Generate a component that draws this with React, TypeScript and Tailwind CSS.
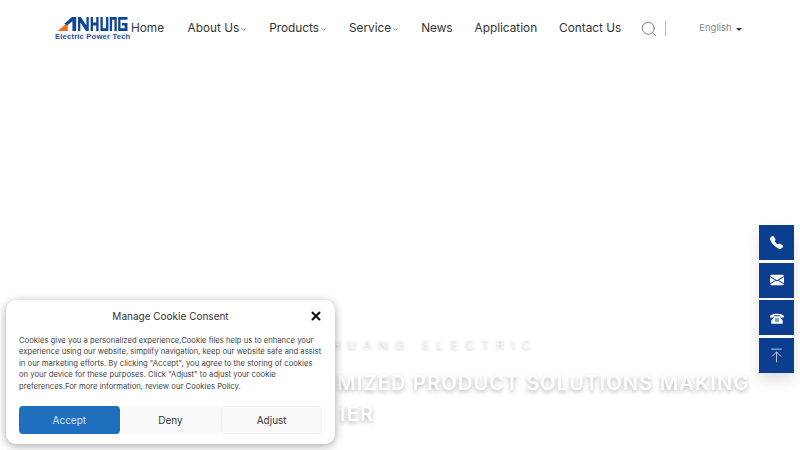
import { ChevronDown, Search, ArrowUpToLine, X } from 'lucide-react';
import { BsTelephoneFill, BsEnvelopeFill } from 'react-icons/bs';

const font = "font-['Inter','Noto_Sans',sans-serif]";

const navItems = [
  { label: 'Home', caret: false },
  { label: 'About Us', caret: true },
  { label: 'Products', caret: true },
  { label: 'Service', caret: true },
  { label: 'News', caret: false },
  { label: 'Application', caret: false },
  { label: 'Contact Us', caret: false },
];

function Logo() {
  return (
    <div className="w-[75px] h-[24px] flex flex-col shrink-0">
      <svg viewBox="0 0 75 15" className="w-[75px] h-[15px]">
        <path d="M0 15 L11 6 V15 Z" fill="#e8701c" />
        <path d="M7 7.5 L15.5 0 H20 V15 H16 V4.5 L11 8.5 Z" fill="#0f4596" />
        <path d="M22 15V0h3l6 9V0h2.5v15h-3l-6-9v9z" fill="#0f4596" />
        <path d="M35.5 0H38v6h3.5V0H44v15h-2.5V9H38v6h-2.5z" fill="#0f4596" />
        <path d="M46 0h2.5v12h3.5V0h2.5v15H46z" fill="#0f4596" />
        <path d="M56 15V0h7.5v15H61V3h-2.5v12z" fill="#0f4596" />
        <path d="M65 0h10v3h-7.5v9H72V9h-3V6.5h6V15H65z" fill="#0f4596" />
      </svg>
      <span className="font-['Liberation_Sans',sans-serif] font-bold text-[7.6px] leading-[9px] tracking-[0.2px] text-[#1b4ea0] whitespace-nowrap mt-[1px]">
        Electric Power Tech
      </span>
    </div>
  );
}

function Header() {
  return (
    <header className="flex items-center h-[57px] pl-[55px]">
      <Logo />
      <nav className="flex items-center ml-[1px] gap-[22px]">
        {navItems.map((item) => (
          <a key={item.label} className="flex items-center text-[11.8px] text-[#333] whitespace-nowrap first:mr-[1.5px]">
            {item.label}
            {item.caret && <ChevronDown className="w-[7px] h-[7px] ml-[1px] mt-[2px] text-[#555]" strokeWidth={2.5} />}
          </a>
        ))}
      </nav>
      <Search className="w-[18px] h-[18px] ml-[19px] text-[#777]" strokeWidth={1.25} />
      <div className="w-px h-[15px] bg-[#bbb] ml-[7px]" />
      <div className="flex items-center ml-[33px] text-[9.5px] text-[#888]">
        English
        <span className="ml-[4px] mt-[1px] border-x-[3px] border-t-[3px] border-x-transparent border-t-[#333]" />
      </div>
    </header>
  );
}

function Hero() {
  return (
    <div className="absolute left-[337px] top-[337px] w-[450px] text-white">
      <div className="-ml-[6px] text-[12px] leading-[16px] tracking-[7.3px] text-white/70 [text-shadow:0_1px_3px_rgba(0,0,0,0.25)] whitespace-nowrap">
        HUANG ELECTRIC
      </div>
      <div className="text-[20px] leading-[31px] font-semibold tracking-[1.2px] mt-[15px] [text-shadow:0_2px_4px_rgba(0,0,0,0.3)] whitespace-nowrap">
        MIZED PRODUCT SOLUTIONS MAKING
        <br />
        <span className="pl-[3px]">IER</span>
      </div>
    </div>
  );
}

function DeskPhone() {
  return (
    <svg viewBox="0 0 16 13" className="w-[14px] h-[12px]" fill="currentColor">
      <path d="M0 4.5C1 .5 15 .5 16 4.5V6h-4.3V3.8C10 3.2 6 3.2 4.3 3.8V6H0z" />
      <path d="M4.5 4.5h7V6l3 3v4h-13V9l3-3z" />
      <rect x="5.5" y="6.5" width="5" height="4.5" fill="#8aa3c9" />
    </svg>
  );
}

function SideBar() {
  const box = 'w-[35px] h-[35px] bg-[#0b3e8f] flex items-center justify-center text-white';
  return (
    <div className="absolute left-[759px] top-[225px] flex flex-col gap-[2.5px] shadow-[0_8px_14px_rgba(0,0,0,0.12)]">
      <div className={box}><BsTelephoneFill className="w-[13px] h-[13px]" /></div>
      <div className={box}><BsEnvelopeFill className="w-[14px] h-[14px]" /></div>
      <div className={box}><DeskPhone /></div>
      <div className={box}><ArrowUpToLine className="w-[17px] h-[17px]" strokeWidth={1} /></div>
    </div>
  );
}

function CookieBox() {
  return (
    <div className="absolute left-[6px] top-[300px] w-[329px] h-[144px] bg-white rounded-[10px] shadow-[0_2px_10px_rgba(0,0,0,0.35)] px-[13px]">
      <div className="relative h-[33px] pt-[9px] text-center text-[10px] leading-[14px] text-[#333]">
        Manage Cookie Consent
        <X className="absolute right-[-1px] top-[9px] w-[14px] h-[14px] text-[#111]" strokeWidth={3.5} />
      </div>
      <p className="text-[7.7px] leading-[11.4px] mt-[2px] text-[#444] whitespace-nowrap">
        Cookies give you a personalized experience,Cookie files help us to enhance your
        <br />
        experience using our website, simplify navigation, keep our website safe and assist
        <br />
        in our marketing efforts. By clicking "Accept", you agree to the storing of cookies
        <br />
        on your device for these purposes. Click "Adjust" to adjust your cookie
        <br />
        preferences.For more information, review our Cookies Policy.
      </p>
      <div className="flex mt-[14px] text-[10px] text-[#333]">
        <button className="w-[101px] h-[28px] rounded-[4px] bg-[#1e6fbe] text-[#d8e8f6]">Accept</button>
        <button className="w-[102px] h-[28px] rounded-[4px] bg-[#f9f9f9]">Deny</button>
        <button className="w-[101px] h-[28px] rounded-[4px] bg-[#f9f9f9] border border-[#f1f1f1]">Adjust</button>
      </div>
    </div>
  );
}

export default function App() {
  return (
    <div className={`relative w-[800px] h-[450px] bg-white overflow-hidden ${font}`}>
      <Header />
      <Hero />
      <SideBar />
      <CookieBox />
    </div>
  );
}
